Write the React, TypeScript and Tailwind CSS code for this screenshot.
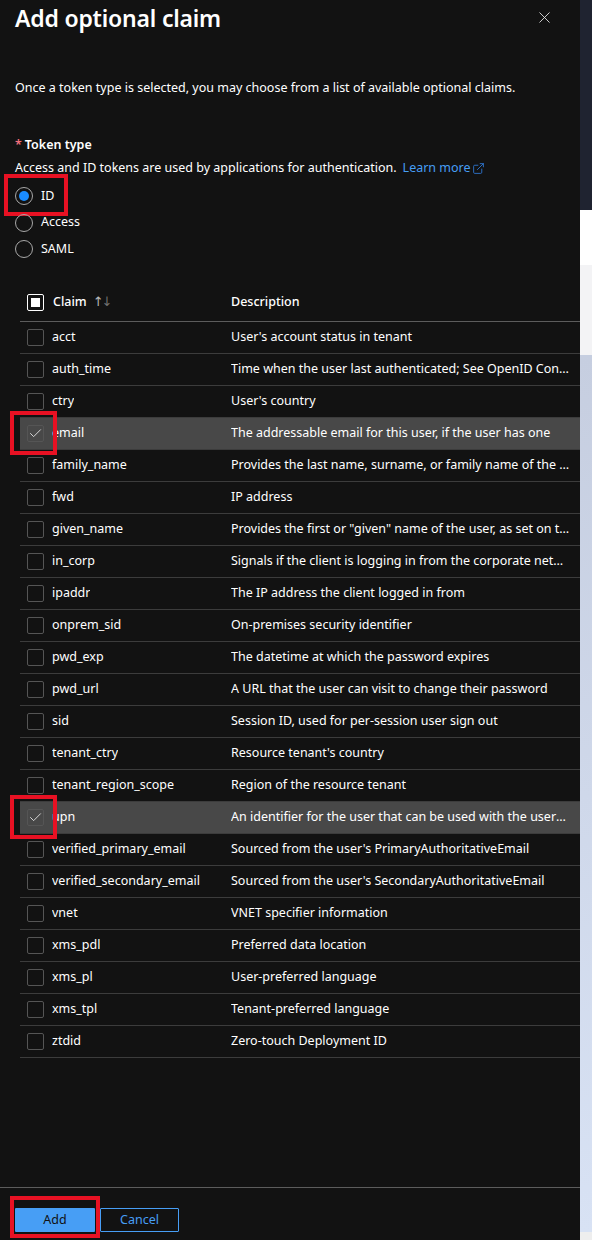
import React, { useState } from 'react';
import { X, Check, ExternalLink } from 'lucide-react';

interface Claim {
  name: string;
  description: string;
}

const CLAIMS: Claim[] = [
  { name: 'acct', description: "User's account status in tenant" },
  { name: 'auth_time', description: 'Time when the user last authenticated; See OpenID Connect spec' },
  { name: 'ctry', description: "User's country" },
  { name: 'email', description: 'The addressable email for this user, if the user has one' },
  { name: 'family_name', description: 'Provides the last name, surname, or family name of the user as defined in the user object' },
  { name: 'fwd', description: 'IP address' },
  { name: 'given_name', description: 'Provides the first or "given" name of the user, as set on the user object' },
  { name: 'in_corp', description: 'Signals if the client is logging in from the corporate network' },
  { name: 'ipaddr', description: 'The IP address the client logged in from' },
  { name: 'onprem_sid', description: 'On-premises security identifier' },
  { name: 'pwd_exp', description: 'The datetime at which the password expires' },
  { name: 'pwd_url', description: 'A URL that the user can visit to change their password' },
  { name: 'sid', description: 'Session ID, used for per-session user sign out' },
  { name: 'tenant_ctry', description: "Resource tenant's country" },
  { name: 'tenant_region_scope', description: 'Region of the resource tenant' },
  { name: 'upn', description: 'An identifier for the user that can be used with the username_hint parameter' },
  { name: 'verified_primary_email', description: "Sourced from the user's PrimaryAuthoritativeEmail" },
  { name: 'verified_secondary_email', description: "Sourced from the user's SecondaryAuthoritativeEmail" },
  { name: 'vnet', description: 'VNET specifier information' },
  { name: 'xms_pdl', description: 'Preferred data location' },
  { name: 'xms_pl', description: 'User-preferred language' },
  { name: 'xms_tpl', description: 'Tenant-preferred language' },
  { name: 'ztdid', description: 'Zero-touch Deployment ID' },
];

const TOKEN_TYPES = ['ID', 'Access', 'SAML'];

export default function App() {
  const [tokenType, setTokenType] = useState('ID');
  const [selected, setSelected] = useState<string[]>(['email', 'upn']);

  const toggle = (name: string) => {
    setSelected(prev => (prev.includes(name) ? prev.filter(n => n !== name) : [...prev, name]));
  };

  return (
    <div className="flex w-[592px] h-[1240px] overflow-hidden font-['Noto_Sans','Open_Sans',sans-serif] text-[13px] text-white">
      {/* Panel */}
      <div className="w-[580px] h-full flex flex-col bg-[#121212]">
        <div className="flex-1 pl-[15px]">
          <div className="flex items-start justify-between h-[36px]">
            <h1 className="text-[23px] leading-[36px] font-semibold tracking-[-0.2px]">Add optional claim</h1>
            <button className="mt-[8px] mr-[26px] text-[#e6e6e6]" aria-label="Close">
              <X size={19} strokeWidth={1.1} />
            </button>
          </div>

          <p className="mt-[42px] leading-[20px] text-[12.5px]">
            Once a token type is selected, you may choose from a list of available optional claims.
          </p>

          <div className="mt-[37px] leading-[20px] font-semibold text-[12.5px]">
            <span className="text-[#f1707b] mr-[3px]">*</span>Token type
          </div>
          <div className="mt-[3px] leading-[20px] text-[12.5px] flex items-center">
            <span>Access and ID tokens are used by applications for authentication.</span>
            <a className="ml-[6px] text-[#479ef5] flex items-center">
              Learn more
              <ExternalLink size={13} strokeWidth={1.6} className="ml-[1px] text-[#2f7ad8]" />
            </a>
          </div>

          <div className="mt-[5px] flex flex-col">
            {TOKEN_TYPES.map(t => (
              <label
                key={t}
                onClick={() => setTokenType(t)}
                className="relative flex items-center h-[26.5px] cursor-pointer"
              >
                <span className="w-[18px] h-[18px] rounded-full border border-[#a8a8a8] flex items-center justify-center">
                  {tokenType === t && <span className="w-[10px] h-[10px] rounded-full bg-[#1a8cff]" />}
                </span>
                <span className="ml-[8px] text-[12.5px]">{t}</span>
                {t === 'ID' && (
                  <span className="absolute left-[-11px] top-[-9px] w-[64px] h-[42px] border-[4px] border-[#e81123]" />
                )}
              </label>
            ))}
          </div>

          {/* Table */}
          <div className="mt-[21px] ml-[5px] text-[12.5px]">
            <div className="grid grid-cols-[211px_1fr] h-[38px] items-center border-b border-[#5c5c5c] font-medium">
              <div className="flex items-center">
                <span className="ml-[7px] w-[17px] h-[17px] border border-white rounded-[2px] flex items-center justify-center">
                  <span className="w-[9px] h-[9px] bg-white" />
                </span>
                <span className="ml-[9px]">Claim</span>
                <span className="ml-[6px] font-normal font-['DejaVu_Sans',sans-serif] text-[13px] tracking-[-2px]">
                  <span className="text-[#b8b8b8]">↑</span>
                  <span className="text-[#707070]">↓</span>
                </span>
              </div>
              <div>Description</div>
            </div>

            {CLAIMS.map(c => {
              const on = selected.includes(c.name);
              return (
                <div
                  key={c.name}
                  onClick={() => toggle(c.name)}
                  className={`relative grid grid-cols-[211px_1fr] h-[32px] items-center border-b border-[#3c3c3c] cursor-pointer ${on ? 'bg-[#484848]' : ''}`}
                >
                  <div className="flex items-center min-w-0">
                    <span className="ml-[7px] w-[17px] h-[17px] shrink-0 border border-[#555555] rounded-[2px] flex items-center justify-center">
                      {on && <Check size={15} strokeWidth={1.5} className="text-[#dedede]" />}
                    </span>
                    <span className="ml-[8px] truncate">{c.name}</span>
                  </div>
                  <div className="truncate pr-[9px]">{c.description}</div>
                  {on && (
                    <span className="absolute left-[-10px] top-[-7px] w-[47px] h-[44px] border-[4px] border-[#e81123]" />
                  )}
                </div>
              );
            })}
          </div>
        </div>

        {/* Footer */}
        <div className="h-[53px] border-t border-[#5c5c5c] pl-[15px] flex items-start pt-[20px] gap-[5px]">
          <div className="relative">
            <button className="w-[80px] h-[24px] bg-[#479ef5] text-[#111111] text-[12.5px] rounded-[1px]">Add</button>
            <span className="absolute left-[-5px] top-[-12px] w-[90px] h-[42px] border-[4px] border-[#e81123]" />
          </div>
          <button className="w-[79px] h-[24px] border border-[#479ef5] text-[#479ef5] text-[12.5px] rounded-[1px]">Cancel</button>
        </div>
      </div>

      {/* Page behind the panel */}
      <div className="flex-1 flex flex-col">
        <div className="h-[210px] bg-[#1f2330]" />
        <div className="h-[55px] bg-white" />
        <div className="h-[90px] bg-[#f3f3f5]" />
        <div className="flex-1 bg-gradient-to-b from-[#c6cee0] to-[#d8e2f4]" />
        <div className="h-[8px] bg-[#eeeeee]" />
      </div>
    </div>
  );
}
